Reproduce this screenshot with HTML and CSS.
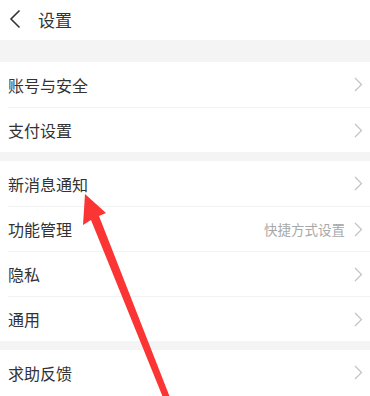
FILE: index.html
```html
<!DOCTYPE html>
<html lang="zh-CN">
<head>
  <meta charset="UTF-8" />
  <title>设置</title>
  <meta name="viewport" content="width=device-width, initial-scale=1" />
  <link rel="stylesheet" href="styles.css">
</head>
<body>
  <div class="page">
    <header class="topbar">
      <svg class="back" width="12" height="20" viewBox="0 0 12 20">
        <polyline points="10.5,1.5 2,10 10.5,18.5" fill="none" stroke="#333" stroke-width="1.6" />
      </svg>
      <span class="title">设置</span>
    </header>

    <div class="spacer spacer-top"></div>

    <div class="group">
      <div class="row"><span class="label">账号与安全</span><svg class="chev" width="9" height="15" viewBox="0 0 9 15"><polyline points="1,1 7.5,7.5 1,14" /></svg></div>
      <div class="row"><span class="label">支付设置</span><svg class="chev" width="9" height="15" viewBox="0 0 9 15"><polyline points="1,1 7.5,7.5 1,14" /></svg></div>
    </div>

    <div class="spacer"></div>

    <div class="group">
      <div class="row"><span class="label">新消息通知</span><svg class="chev" width="9" height="15" viewBox="0 0 9 15"><polyline points="1,1 7.5,7.5 1,14" /></svg></div>
      <div class="row"><span class="label">功能管理</span><span class="extra">快捷方式设置</span><svg class="chev" width="9" height="15" viewBox="0 0 9 15"><polyline points="1,1 7.5,7.5 1,14" /></svg></div>
      <div class="row"><span class="label">隐私</span><svg class="chev" width="9" height="15" viewBox="0 0 9 15"><polyline points="1,1 7.5,7.5 1,14" /></svg></div>
      <div class="row"><span class="label">通用</span><svg class="chev" width="9" height="15" viewBox="0 0 9 15"><polyline points="1,1 7.5,7.5 1,14" /></svg></div>
    </div>

    <div class="spacer"></div>

    <div class="group">
      <div class="row"><span class="label">求助反馈</span><svg class="chev" width="9" height="15" viewBox="0 0 9 15"><polyline points="1,1 7.5,7.5 1,14" /></svg></div>
    </div>

    <!-- red annotation arrow drawn over the list -->
    <svg class="pointer" width="370" height="396" viewBox="0 0 370 396">
      <polygon points="85,194 106,213 99,216 171,400 164,400 91,220 83,225" fill="#fb3434" />
    </svg>
  </div>
</body>
</html>
```

FILE: styles.css
```css
html, body {
  margin: 0;
  padding: 0;
}
body {
  font-family: "Noto Sans CJK SC", "Noto Sans", sans-serif;
  background: #fff;
  color: #333;
}
.page {
  position: relative;
  width: 370px;
  height: 396px;
  overflow: hidden;
}
.topbar {
  height: 40px;
  display: flex;
  align-items: center;
  padding-left: 9px;
  box-sizing: border-box;
}
.back {
  margin-top: -2px;
}
.title {
  margin-left: 17px;
  font-size: 17px;
  color: #333;
  margin-top: -2px;
}
.spacer {
  height: 9px;
  background: #f4f4f4;
}
.spacer-top {
  height: 22px;
}
.group {
  background: #fff;
  padding-left: 8px;
}
.row {
  height: 45px;
  display: flex;
  align-items: center;
  box-sizing: border-box;
  border-top: 1px solid #f2f2f2;
  padding-right: 7px;
}
.row:first-child {
  border-top: none;
}
.label {
  flex: 1;
  font-size: 16px;
  color: #333;
}
.extra {
  font-size: 13.5px;
  color: #a8a8a8;
  margin-right: 9px;
}
.chev {
  fill: none;
  stroke: #c2c2c2;
  stroke-width: 1.2;
}
.pointer {
  position: absolute;
  left: 0;
  top: 0;
}
```
